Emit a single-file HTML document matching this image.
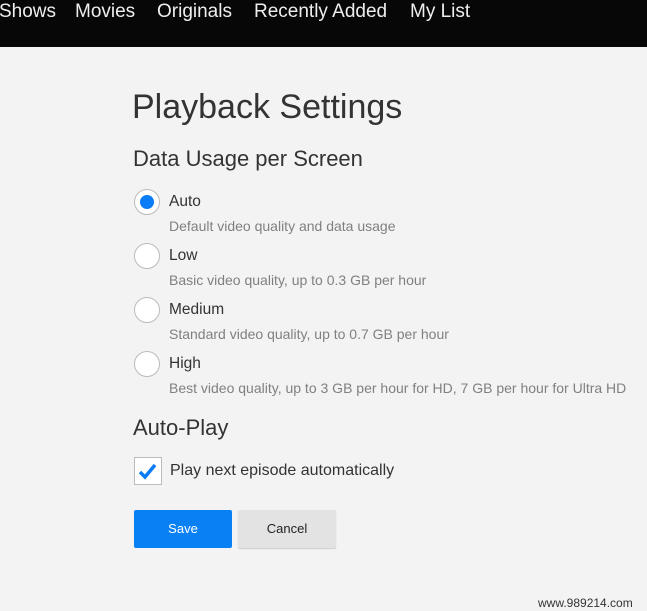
<html><head><style>
body{margin:0;width:647px;height:611px;background:#f3f3f3;font-family:"Liberation Sans",sans-serif;position:relative;overflow:hidden}
.a{position:absolute;white-space:nowrap}
.hdr{position:absolute;left:0;top:0;width:647px;height:47px;background:#070707}
.nav{color:#eee;font-size:19px;top:1px}
.r{position:absolute;width:24px;height:24px;border:1px solid #bbb;border-radius:50%;background:#fff;left:134px}
.lab{font-size:15.5px;color:#333;left:169px}
.d{font-size:14px;color:#808080;left:169px}
</style></head><body>
<div class="hdr"></div>
<div class="a nav" style="left:-1px">Shows</div>
<div class="a nav" style="left:75px">Movies</div>
<div class="a nav" style="left:157px">Originals</div>
<div class="a nav" style="left:254px">Recently Added</div>
<div class="a nav" style="left:410px">My List</div>
<div class="a" style="left:132px;top:88px;font-size:34px;color:#333">Playback Settings</div>
<div class="a" style="left:133px;top:146px;font-size:22px;color:#333">Data Usage per Screen</div>
<div class="r" style="top:189px"><div style="position:absolute;left:5px;top:5px;width:14px;height:14px;border-radius:50%;background:#0a7cf5"></div></div>
<div class="a lab" style="top:193px">Auto</div>
<div class="a d" style="top:218px">Default video quality and data usage</div>
<div class="r" style="top:243px"></div>
<div class="a lab" style="top:247px">Low</div>
<div class="a d" style="top:272px">Basic video quality, up to 0.3 GB per hour</div>
<div class="r" style="top:297px"></div>
<div class="a lab" style="top:301px">Medium</div>
<div class="a d" style="top:326px">Standard video quality, up to 0.7 GB per hour</div>
<div class="r" style="top:351px"></div>
<div class="a lab" style="top:355px">High</div>
<div class="a d" style="top:380px">Best video quality, up to 3 GB per hour for HD, 7 GB per hour for Ultra HD</div>
<div class="a" style="left:133px;top:415px;font-size:22px;color:#333">Auto-Play</div>
<div class="a" style="left:134px;top:457px;width:26px;height:26px;border:1px solid #bbb;background:#fff">
<svg width="26" height="26" viewBox="0 0 26 26"><path d="M5 14 L10 19 L20 7" stroke="#0a7cf5" stroke-width="3.5" fill="none"/></svg></div>
<div class="a" style="left:170px;top:462px;font-size:16px;color:#333">Play next episode automatically</div>
<div class="a" style="left:134px;top:510px;width:98px;height:38px;background:#0a80f5;border-radius:2px;color:#fff;font-size:13px;text-align:center;line-height:38px">Save</div>
<div class="a" style="left:238px;top:510px;width:98px;height:38px;background:#e3e3e3;border-radius:2px;color:#222;font-size:13px;text-align:center;line-height:38px;box-shadow:0 1px 1px #ccc">Cancel</div>
<div class="a" style="left:538px;top:596px;font-size:12px;color:#333">www.989214.com</div>
</body></html>
